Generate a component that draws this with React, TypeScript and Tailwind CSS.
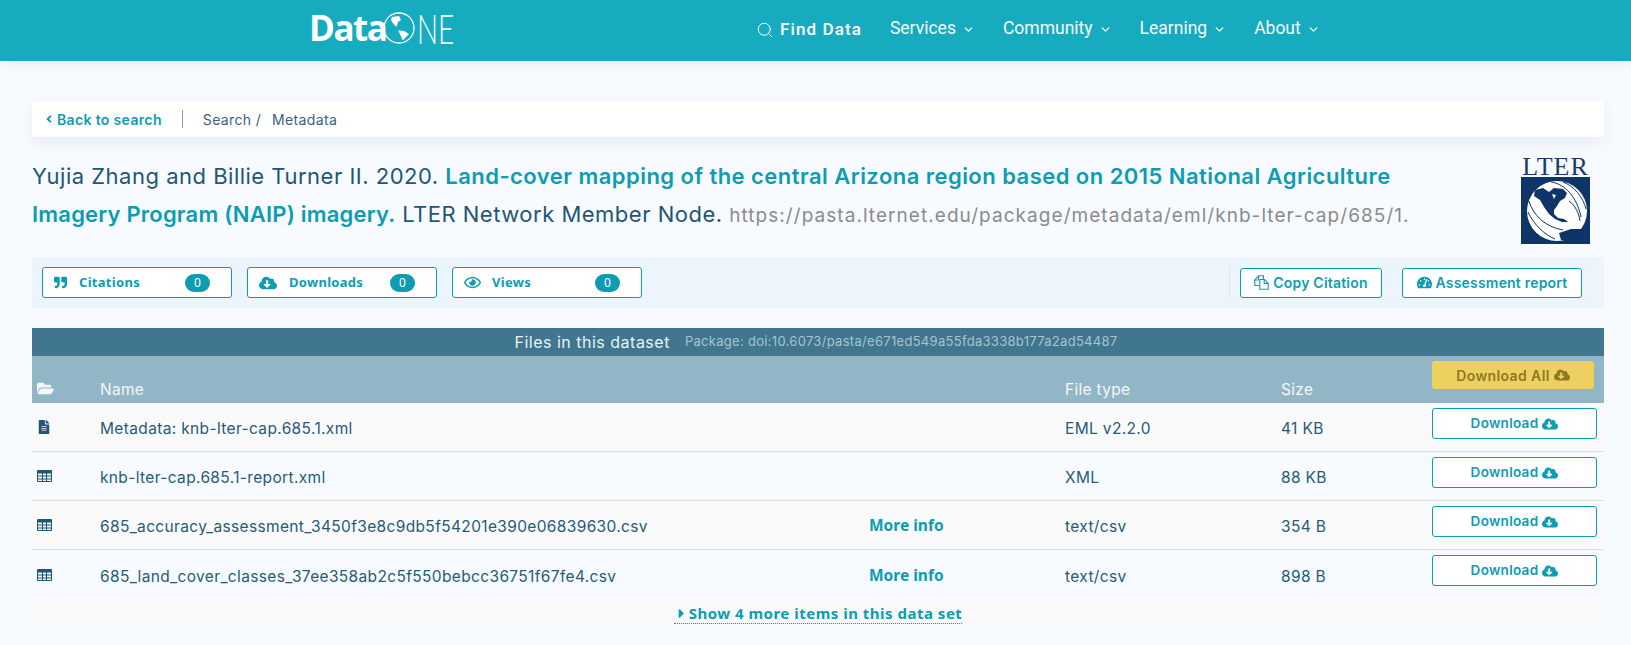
import { FaAngleLeft, FaQuoteRight, FaCloudDownloadAlt, FaRegEye, FaTachometerAlt, FaFolderOpen, FaFileAlt, FaCaretRight } from "react-icons/fa";
import { ChevronDown, Search } from "lucide-react";

const rows = [
  { icon: "doc", name: "Metadata: knb-lter-cap.685.1.xml", info: false, type: "EML v2.2.0", size: "41 KB", bg: "bg-[#fafafa]" },
  { icon: "table", name: "knb-lter-cap.685.1-report.xml", info: false, type: "XML", size: "88 KB", bg: "bg-[#f7fbff]" },
  { icon: "table", name: "685_accuracy_assessment_3450f3e8c9db5f54201e390e06839630.csv", info: true, type: "text/csv", size: "354 B", bg: "bg-[#fafafa]" },
  { icon: "table", name: "685_land_cover_classes_37ee358ab2c5f550bebcc36751f67fe4.csv", info: true, type: "text/csv", size: "898 B", bg: "bg-[#f7fbff]" },
];

const NavItem = ({ label }: { label: string }) => (
  <a className="flex items-center gap-[6px] text-[17.5px] text-[#f4fbfd] font-['Roboto',sans-serif]">
    {label}
    <ChevronDown size={13} strokeWidth={2.5} className="mt-[3px]" />
  </a>
);

const StatButton = ({ icon, label, iconWidth, labelWidth }: { icon: React.ReactNode; label: string; iconWidth: string; labelWidth: string }) => (
  <div className="flex items-center w-[190px] h-[31px] bg-white border border-[#0d9cb2] rounded-[3px] pl-[11px] text-[13px] font-bold tracking-[0.3px] text-[#0d9cb2] font-['Noto_Sans',sans-serif]">
    <span className={iconWidth}>{icon}</span>
    <span className={labelWidth}>{label}</span>
    <span className="w-[25px] h-[18px] flex items-center justify-center rounded-full bg-[#0d9cb2] text-white text-[12px] font-normal">0</span>
  </div>
);

const TableIcon = () => (
  <svg width="15" height="12" viewBox="0 0 15 12">
    <rect width="15" height="12" rx="1" fill="#1f5674" />
    <path d="M1 3.5h4v2H1zM6 3.5h3v2H6zM10 3.5h4v2h-4zM1 6.5h4v2H1zM6 6.5h3v2H6zM10 6.5h4v2h-4zM1 9.5h4v1.5H1zM6 9.5h3v1.5H6zM10 9.5h4v1.5h-4z" fill="#f5f8fa" />
  </svg>
);

const CopyIcon = () => (
  <svg width="15" height="15" viewBox="0 0 15 15" fill="none" stroke="#0d9cb2" strokeWidth="1.1">
    <path d="M5.5 10.5H0.8V5L4.6 0.8H9.5V4.5" />
    <path d="M4.6 0.8V5H0.8" />
    <path d="M5.8 4.5H10.5L14.2 8.2V14.2H5.8Z" />
    <path d="M10.2 4.5V8.4H14.2" />
  </svg>
);

const DataOneLogo = () => (
  <div className="flex items-center text-white h-[32px]">
    <span className="w-[74px] text-[35px] font-bold tracking-[-1.5px] font-['Open_Sans',sans-serif]">Data</span>
    <svg width="32" height="32" viewBox="0 0 32 32">
      <circle cx="16" cy="16" r="15" fill="none" stroke="white" strokeWidth="1.3" />
      <path d="M9 5L16 4L18 8L15 10L13.5 15L10.5 12L8 8Z" fill="white" />
      <path d="M15 18.5L21 19L26 22L23 25L20 28.5L18.5 25.5L16.5 21Z" fill="white" />
    </svg>
    <span className="ml-[2px] w-[38px] origin-left scale-x-[0.68] text-[41px] font-light font-['Lato',sans-serif] leading-none">NE</span>
  </div>
);

const LterLogo = () => (
  <div className="w-[69px] shrink-0 flex flex-col items-center">
    <span className="text-[26px] leading-[20px] tracking-[1px] text-[#1a3a6b] font-['Liberation_Serif',serif]">LTER</span>
    <svg width="69" height="67" viewBox="0 0 69 67">
      <rect width="69" height="67" fill="#0f3468" />
      <circle cx="36" cy="34" r="30" fill="white" />
      <path d="M8 24C12 38 24 50 42 53M7 35C13 48 24 58 34 62M30 5C44 7 56 20 60 40M42 5C53 9 62 20 65 32M48 24C54 28 58 36 59 44" fill="none" stroke="#0f3468" strokeWidth="1" />
      <path d="M14 13L22 11L28 15L33 11L42 12L46 16L44 21L39 24L36 29L33 33L33 37L37 41L43 42L47 45L41 45L34 42L28 37L23 30L19 23L13 19Z" fill="#0f3468" />
      <path d="M31 17L35 18L33 22Z" fill="white" />
      <path d="M38 56L50 52L62 52L52 65L40 63Z" fill="#0f3468" />
    </svg>
  </div>
);

const App = () => {
  return (
    <div className="w-[1631px] h-[645px] overflow-hidden bg-[#f7fbff] font-['Inter',sans-serif]">
      {/* Header */}
      <header className="h-[61px] bg-[#17abc0] flex items-start shadow-[0_2px_10px_rgba(0,0,0,0.08)]">
        <div className="ml-[309px] mt-[12px] w-[447px]">
          <DataOneLogo />
        </div>
        <nav className="flex items-center mt-[13px] gap-[28px]">
          <a className="flex items-center gap-[6px] text-[17px] font-medium tracking-[1.1px] text-white mt-[4px] font-['Roboto',sans-serif]">
            <Search size={18} strokeWidth={1.3} />
            Find Data
          </a>
          <NavItem label="Services" />
          <NavItem label="Community" />
          <NavItem label="Learning" />
          <NavItem label="About" />
        </nav>
      </header>

      <main className="px-[32px] pt-[40px]">
        <div className="w-[1572px]">
          {/* Breadcrumb */}
          <div className="h-[36px] bg-white rounded-[3px] flex items-center pl-[11px] text-[14px] tracking-[0.35px] shadow-[0_6px_14px_rgba(40,70,100,0.08)]">
            <FaAngleLeft size={12} className="text-[#0d9cb2] mr-[2px]" />
            <span className="font-semibold text-[#0d9cb2]">Back to search</span>
            <span className="h-[18px] w-px bg-[#999] mx-[20px]" />
            <span className="text-[#39627a]">Search /</span>
            <span className="text-[#39627a] ml-[11px]">Metadata</span>
          </div>

          {/* Citation */}
          <div className="flex justify-between mt-[20px] h-[100px]">
            <p className="text-[22px] leading-[38px] tracking-[0.5px] text-[#1f5674] w-[1420px]">
              Yujia Zhang and Billie Turner II. 2020.{" "}
              <span className="font-semibold tracking-[0.46px] text-[#0d9cb2]">Land-cover mapping of the central Arizona region based on 2015 National Agriculture</span>{" "}
              <span className="font-semibold tracking-[0.2px] text-[#0d9cb2]">Imagery Program (NAIP) imagery.</span>{" "}
              LTER Network Member Node.{" "}
              <span className="text-[19px] tracking-[1.05px] text-[#8b8b8b]">https://pasta.lternet.edu/package/metadata/eml/knb-lter-cap/685/1.</span>
            </p>
            <div className="mr-[14px]">
              <LterLogo />
            </div>
          </div>

          {/* Stats */}
          <div className="h-[51px] bg-[#ecf5fc] rounded-[3px] flex items-center pl-[10px]">
            <div className="flex gap-[15px]">
              <StatButton icon={<FaQuoteRight size={13} />} label="Citations" iconWidth="w-[25px]" labelWidth="w-[106px]" />
              <StatButton icon={<FaCloudDownloadAlt size={18} />} label="Downloads" iconWidth="w-[30px]" labelWidth="w-[101px]" />
              <StatButton icon={<FaRegEye size={17} />} label="Views" iconWidth="w-[28px]" labelWidth="w-[103px]" />
            </div>
            <div className="ml-auto flex items-center h-[30px] border-l border-[#dde5ea] pl-[10px]">
              <button className="flex items-center justify-center gap-[4px] w-[142px] h-[30px] bg-white border border-[#0d9cb2] rounded-[3px] text-[14px] tracking-[0.2px] font-semibold text-[#0d9cb2]">
                <CopyIcon />
                Copy Citation
              </button>
              <button className="flex items-center justify-center gap-[4px] w-[180px] h-[30px] ml-[20px] mr-[22px] bg-white border border-[#0d9cb2] rounded-[3px] text-[14px] tracking-[0.2px] font-semibold text-[#0d9cb2]">
                <FaTachometerAlt size={15} />
                Assessment report
              </button>
            </div>
          </div>

          {/* Files table */}
          <section className="mt-[20px]">
            <div className="h-[28px] bg-[#40768e] flex items-center justify-center text-[16px] tracking-[0.5px] text-[#e9f2f6] pr-[4px]">
              <span>Files in this dataset</span>
              <span className="ml-[15px] text-[13px] tracking-[0.3px] text-[#a5c4d2]">Package: doi:10.6073/pasta/e671ed549a55fda3338b177a2ad54487</span>
            </div>
            <div className="h-[47px] bg-[#92b6c6] grid grid-cols-[68px_769px_196px_216px_151px_172px] text-[15.5px] tracking-[0.3px] text-[#f3f8fa]">
              <div className="pl-[5px] pt-[24px]"><FaFolderOpen size={17} /></div>
              <div className="pt-[22px]">Name</div>
              <div className="pt-[22px]" />
              <div className="pt-[22px]">File type</div>
              <div className="pt-[22px]">Size</div>
              <div className="pt-[5px]">
                <button className="flex items-center justify-center gap-[4px] w-[162px] h-[28px] bg-[#eed061] rounded-[3px] text-[14px] tracking-[0.4px] font-semibold text-[#8f7a20]">
                  Download All
                  <FaCloudDownloadAlt size={16} />
                </button>
              </div>
            </div>
            {rows.map((row, i) => (
              <div key={row.name} className={`h-[49px] pt-[4px] ${row.bg} ${i < rows.length - 1 ? "border-b border-[#dcdfe3]" : ""} grid grid-cols-[68px_769px_196px_216px_151px_172px] items-center text-[15.5px] tracking-[0.35px] text-[#265b78]`}>
                <div className="pl-[5px] pb-[4px] text-[#1f5674]">
                  {row.icon === "doc" ? <FaFileAlt size={14} /> : <TableIcon />}
                </div>
                <div>{row.name}</div>
                <div className="pb-[2px] text-[15.5px] font-bold tracking-normal text-[#0d9cb2] font-['Noto_Sans',sans-serif]">{row.info ? "More info" : ""}</div>
                <div>{row.type}</div>
                <div>{row.size}</div>
                <div className="self-start mt-[1px]">
                  <button className="flex items-center justify-center gap-[4px] w-[165px] h-[31px] bg-white border border-[#0d9cb2] rounded-[3px] text-[13.5px] tracking-[0.3px] font-semibold text-[#0d9cb2]">
                    Download
                    <FaCloudDownloadAlt size={16} />
                  </button>
                </div>
              </div>
            ))}
            <div className="h-[27px] bg-[#fafafa] flex items-center justify-center">
              <a className="flex items-center h-[21px] mt-[2px] border-b border-dotted border-[#0d9cb2] text-[15px] font-bold tracking-[0.5px] text-[#0d9cb2] font-['Noto_Sans',sans-serif]">
                <FaCaretRight size={15} />
                Show 4 more items in this data set
              </a>
            </div>
          </section>
        </div>
      </main>
    </div>
  );
};

export default App;
